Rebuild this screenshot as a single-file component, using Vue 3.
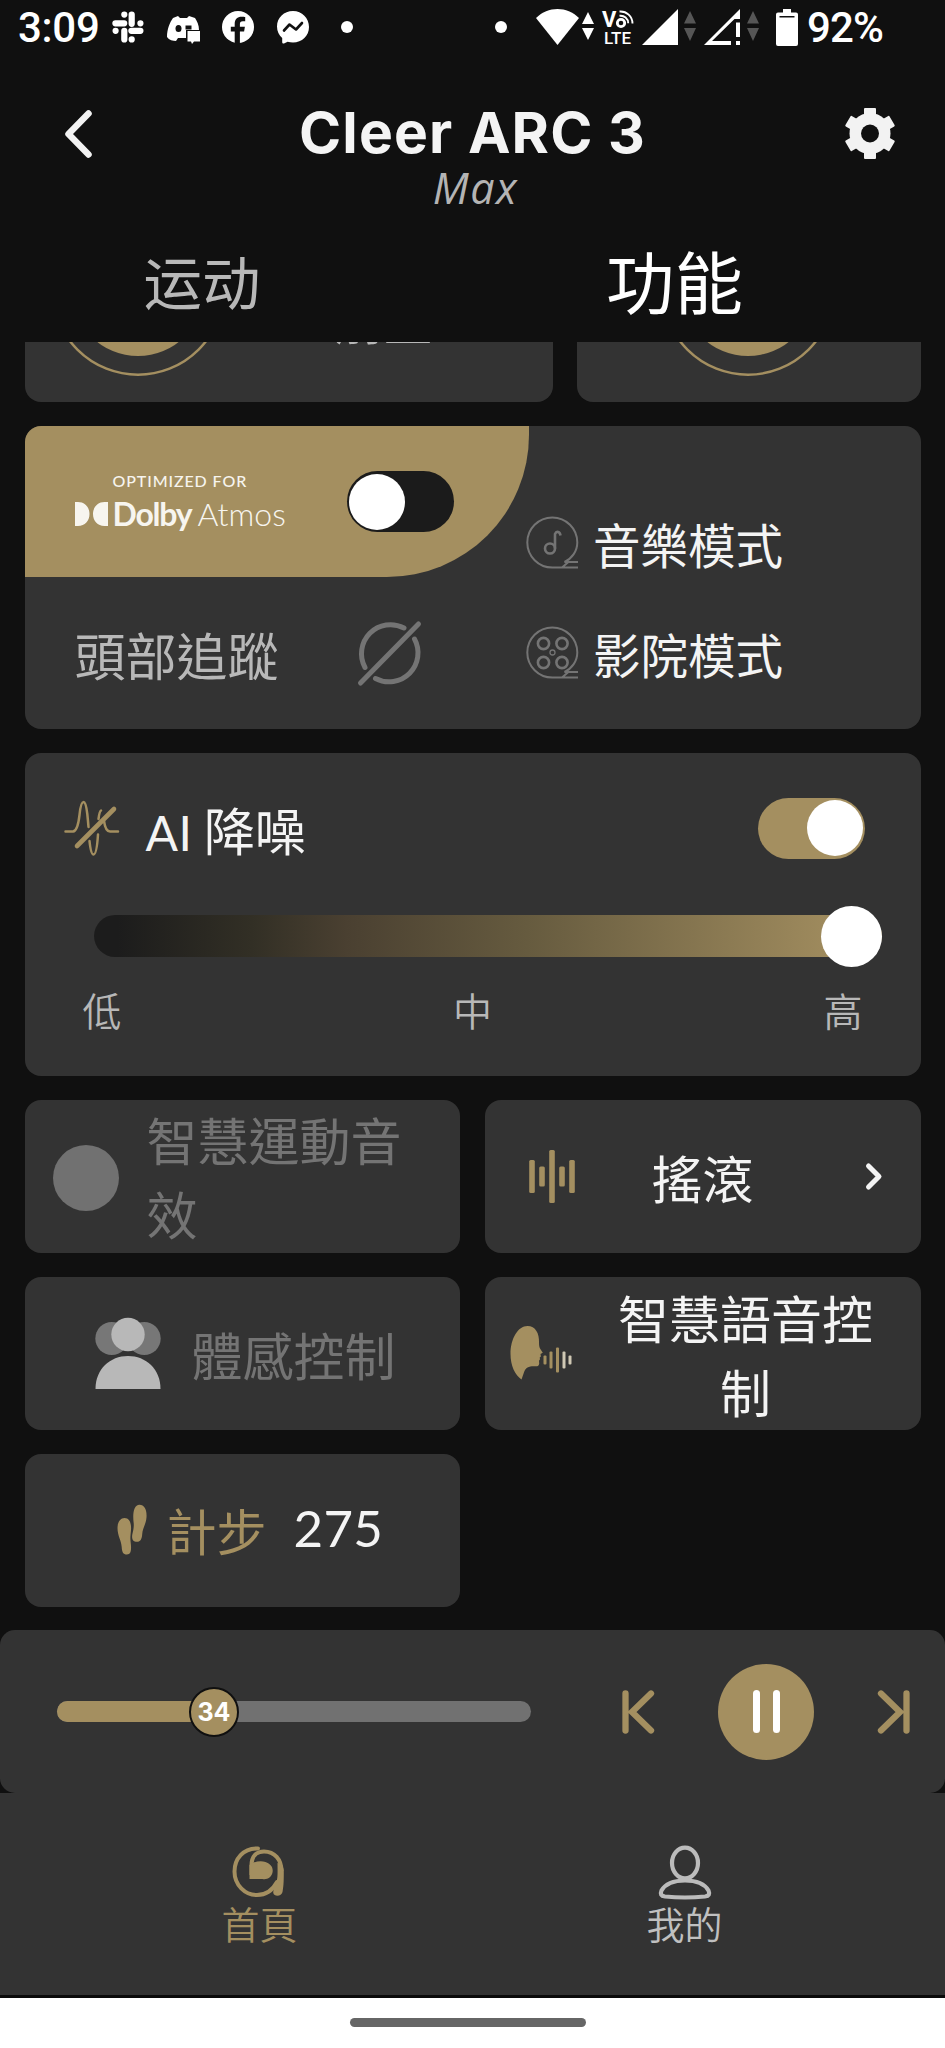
<script setup>
import { ref } from 'vue'

const volume = ref(34)
const dolbyOn = ref(false)
const aiOn = ref(true)
const eqBars = [
  { x: 3, h: 33 },
  { x: 13, h: 20 },
  { x: 23, h: 53 },
  { x: 33, h: 20 },
  { x: 43, h: 33 },
]
const voiceBars = [
  { x: 35, h: 9 },
  { x: 41, h: 17 },
  { x: 47.5, h: 25 },
  { x: 54, h: 17 },
  { x: 60, h: 9 },
]
</script>

<template>
  <div class="phone">
    <div class="status">
      <span class="clock">3:09</span>
      <svg class="s-slack" width="32" height="32" viewBox="0 0 32 32" fill="none" stroke="#fff" stroke-width="6.2" stroke-linecap="round">
        <path d="M19.7 3.6v9.2M28.4 19.8h-9M12.3 28.4v-8.6M3.4 12.3h8.8" />
        <path d="M12.3 3.6h.01M28.4 12.3h.01M19.7 28.4h.01M3.6 19.8h.01" />
      </svg>
      <svg class="s-discord" width="34" height="30" viewBox="0 0 34 30">
        <path fill="#fff" d="M11 2 6 4C3 8 0 15 0 23c2 3 6 4 9 4l2-3h8V16h13c0-5-2-9-4-12l-6-2-2 2h-7z" />
        <ellipse cx="11.5" cy="14.5" rx="3" ry="3.6" fill="#101010" />
        <path fill="#101010" d="M18.500 11.500h6v4h-6z" />
        <path fill="#fff" d="M20.500 17H33v10.500h-6L25 30l-1-2.500h-3.500z" />
      </svg>
      <svg class="s-fb" width="32" height="32" viewBox="0 0 32 32">
        <circle cx="16" cy="16" r="16" fill="#fff" />
        <path d="M12.700 32V20.500H8.800v-4.800h3.900v-3c0-4.600 2.800-7 6.800-7 1.700 0 3 .2 3.700.3v4.300h-2.300c-2.400 0-3 1.200-3 2.800v2.600h5l-.8 4.800h-4.200V32z" fill="#101010" />
      </svg>
      <svg class="s-msg" width="32" height="33" viewBox="0 0 32 33">
        <path fill="#fff" d="M16 0C7 0 0 6.600 0 15.500c0 4.700 2 8.700 5.200 11.500v4.200c0 1 1 1.600 1.800 1.200l3.600-1.700c1.700.5 3.500.8 5.400.8 9 0 16-6.600 16-15.500S25 0 16 0z" />
        <path fill="none" stroke="#101010" stroke-width="2.600" stroke-linejoin="round" stroke-linecap="round" d="M7 19.500l5.500-6 6.500 5 6-6.500" />
      </svg>
      <i class="dot d1"></i>
      <i class="dot d2"></i>
      <svg class="s-wifi" width="43" height="36" viewBox="0 0 43 36"><path fill="#fff" d="M0 9C12-3 31-3 43 9L21.500 36z" /></svg>
      <svg class="s-ar1" width="12" height="28" viewBox="0 0 12 28"><path fill="#fff" d="M6 0l6 12H0zM6 28l6-12H0z" /></svg>
      <svg class="s-volte" width="33" height="36" viewBox="0 0 33 36">
        <text x="0" y="18" class="vo">V</text>
        <circle cx="19" cy="14" r="3.700" fill="none" stroke="#fff" stroke-width="2.800" />
        <path d="M17.500 6.800a7.500 7.500 0 0 1 8.700 7.500M17.500 2.500a12 12 0 0 1 13 12" fill="none" stroke="#fff" stroke-width="1.900" />
        <text x="2" y="35" class="lte" textLength="27">LTE</text>
      </svg>
      <svg class="s-sig" width="36" height="36" viewBox="0 0 36 36"><path fill="#fff" d="M36 0v36H0z" /></svg>
      <svg class="s-ar2" width="12" height="30" viewBox="0 0 12 30"><path fill="#565656" d="M6 0l6 12.500H0zM6 30l6-13H0z" /></svg>
      <svg class="s-sig2" width="37" height="36" viewBox="0 0 37 36">
        <path fill="#fff" d="M36 0v10h-5.500L8 32h19v4H0z" />
        <path fill="#fff" d="M32 13.500h4V28h-4zM32 32h4v4h-4z" />
      </svg>
      <svg class="s-ar3" width="12" height="30" viewBox="0 0 12 30"><path fill="#565656" d="M6 0l6 12.500H0zM6 30l6-13H0z" /></svg>
      <svg class="s-bat" width="22" height="37" viewBox="0 0 22 37">
        <path fill="#fff" d="M7 0h8v3.500h5a2 2 0 0 1 2 2V35a2 2 0 0 1-2 2H2a2 2 0 0 1-2-2V5.500a2 2 0 0 1 2-2h5z" />
        <path fill="#101010" d="M3.500 7h15v1.500h-15z" />
      </svg>
      <span class="pct">92%</span>
    </div>

    <header class="header">
      <svg class="back" width="30" height="60" viewBox="0 0 30 60" fill="none" stroke="#f2f2f2" stroke-width="6.500" stroke-linecap="round" stroke-linejoin="round">
        <path d="M25.500 10.500 5.500 31 25.500 51.500" />
      </svg>
      <div class="titles">
        <h1>Cleer ARC 3</h1>
        <p>Max</p>
      </div>
      <svg class="gear" width="52" height="60" viewBox="-26 -30.500 52 60">
        <g fill="#f2f2f2">
          <circle r="20.500" />
          <rect v-for="a in [0, 60, 120, 180, 240, 300]" :key="a" x="-6" y="-25.500" width="12" height="12" rx="1" :transform="`rotate(${a})`" />
        </g>
        <circle r="9" fill="#101010" />
      </svg>
    </header>

    <nav class="tabs">
      <span class="tab">运动</span>
      <span class="tab active">功能</span>
    </nav>

    <main class="content">
      <section class="row peek">
        <div class="card wide">
          <svg class="knob" width="174" height="174" viewBox="0 0 174 174"><circle cx="87" cy="88" r="66" fill="#a48f60" /><circle cx="87" cy="87" r="85.700" fill="none" stroke="#a48f60" stroke-width="2.500" /></svg>
          <span>前置</span>
        </div>
        <div class="card slim">
          <svg class="knob" width="174" height="174" viewBox="0 0 174 174"><circle cx="87" cy="88" r="66" fill="#a48f60" /><circle cx="87" cy="87" r="85.700" fill="none" stroke="#a48f60" stroke-width="2.500" /></svg>
        </div>
      </section>

      <section class="card dolby">
        <div class="left">
          <div class="gold">
            <div class="logo">
              <small>OPTIMIZED FOR</small>
              <div class="brand">
                <svg width="33" height="24" viewBox="0 0 33 24" fill="#f7f5ef"><path d="M0 0h3c7 0 11.500 5.400 11.500 12S10 24 3 24H0zM33 0h-3.500C22.500 0 18 5.400 18 12s4.500 12 11.500 12H33z" /></svg>
                <b>Dolby</b><span>Atmos</span>
              </div>
            </div>
            <div class="toggle dark" :class="{ on: dolbyOn }"><i></i></div>
          </div>
          <div class="head">
            <span>頭部追蹤</span>
            <svg width="66" height="66" viewBox="0 0 66 66" fill="none" stroke="#747474" stroke-width="5" stroke-linecap="round">
              <path d="M47 8A29 29 0 0 0 8 47.500M18.500 58.500A29 29 0 0 0 57.500 19M3.500 63 61.500 4" />
            </svg>
          </div>
        </div>
        <div class="modes">
          <div>
            <svg width="54" height="54" viewBox="0 0 54 54" fill="none" stroke="#747474" stroke-width="2">
              <path d="M53 46H39.500C47 42.500 52.300 35 52.300 26.500A25 25 0 1 0 27.300 51.500H53M37 51.500l7-6" />
              <circle cx="25" cy="32.500" r="5" stroke-width="2.600" /><path stroke-width="2.600" d="M30 32.500V18c1.500-3.500 5-2.500 5.500 1.500" />
            </svg>
            <span>音樂模式</span>
          </div>
          <div>
            <svg width="54" height="54" viewBox="0 0 54 54" fill="none" stroke="#747474" stroke-width="2">
              <path d="M53 46H39.500C47 42.500 52.300 35 52.300 26.500A25 25 0 1 0 27.300 51.500H53M37 51.500l7-6" />
              <g stroke-width="2.600"><circle cx="18.500" cy="17.500" r="5.600" /><circle cx="37" cy="17.500" r="5.600" /><circle cx="18.500" cy="36.500" r="5.600" /><circle cx="37" cy="36.500" r="5.600" /></g>
              <circle cx="27.500" cy="26.500" r="2.500" stroke-width="1.300" />
            </svg>
            <span>影院模式</span>
          </div>
        </div>
      </section>

      <section class="card ai">
        <div class="ai-top">
          <svg width="56" height="56" viewBox="0 0 56 56" fill="none" stroke="#a48f60" stroke-width="2.500" stroke-linecap="round" stroke-linejoin="round">
            <path d="M1.500 31.500H9C13 31 14.500 24 15.500 15 16.500 5 18 2 19.500 2c2 0 3 5 3.800 12 .6 6 .9 9 1.200 13M25.500 41c.8 8 2 13.500 4 13.500 2.200 0 3.600-6 4.500-20M34.500 19c.6-5 1.500-8 2.500-8.500M40 21c1 7 2.500 10.500 6 10.500h8" />
            <path stroke-width="4.600" d="M13 46 50 9" />
          </svg>
          <span class="ai-title"><em>AI</em> 降噪</span>
          <div class="toggle" :class="{ on: aiOn }"><i></i></div>
        </div>
        <div class="level"><i></i></div>
        <div class="marks"><span>低</span><span>中</span><span>高</span></div>
      </section>

      <section class="grid">
        <div class="card t-sport"><i class="disc"></i><span>智慧運動音效</span></div>
        <div class="card t-eq">
          <svg width="46" height="56" viewBox="0 0 46 56" fill="#a48f60"><rect v-for="b in eqBars" :key="b.x" :x="b.x - 2.800" :y="28.500 - b.h / 2" width="5.600" :height="b.h" rx="1.500" /></svg>
          <span>搖滾</span>
          <svg width="18" height="30" viewBox="0 0 18 30" fill="none" stroke="#f4f4f4" stroke-width="5" stroke-linecap="round" stroke-linejoin="round"><path d="M3.500 5 14 15.500 3.500 26" /></svg>
        </div>
        <div class="card t-body">
          <svg width="66" height="72" viewBox="0 0 66 72">
            <circle cx="16.800" cy="21.500" r="16.500" fill="#777" /><circle cx="49.200" cy="21.500" r="16.500" fill="#777" />
            <circle cx="33" cy="17.500" r="16.700" fill="#b8b8b8" /><path d="M.5 72C.5 52 15 39 33 39S65.500 52 65.500 72z" fill="#b8b8b8" />
          </svg>
          <span>體感控制</span>
        </div>
        <div class="card t-voice">
          <svg width="64" height="56" viewBox="0 0 64 56" fill="#a48f60">
            <path d="M17.500 1C25.500 1 29.500 8.500 29 17.500c0 4 .5 5.500 2 7.500l1.800 2.800-2.300 1.200.4 2.500-1.200 1 .3 1.700-1 1.500.2 2.800c-.2 2.200-1.500 3-4 2.800-6-.3-9.500 1.200-11 5.500L11.500 54.500C5 50 .5 40.500.5 29 .5 13.500 8 1 17.500 1z" />
            <rect v-for="b in voiceBars" :key="b.x" :x="b.x - 1.500" :y="35 - b.h / 2" width="3" :height="b.h" rx="1" :class="{ pale: b.x > 50 }" />
          </svg>
          <span>智慧語音控制</span>
        </div>
        <div class="card t-steps">
          <svg width="32" height="52" viewBox="0 0 32 52" fill="#a48f60">
            <path d="M7.500 14c5 0 7 5 6.500 12-.5 6-1 8-.2 13.500C14.500 46 14 50.500 10 50.500S5 48 4.700 43C4.300 36 .5 32 .5 24c0-6 3-10 7-10zM22.500.8c5 0 7.500 5 7 12.500-.5 7-4 11-4.300 17-.3 5-2 7.500-5 7.500-4.500 0-5.500-2.800-5-6.800 1-5 2-8 1.400-12.500C15.500 9 17 .8 22.500.8z" />
          </svg>
          <span>計步</span><b>275</b>
        </div>
      </section>
    </main>

    <section class="player-wrap">
      <div class="player">
        <div class="volume">
          <div class="fill"></div>
          <div class="thumb" :style="{ left: `calc(${volume}% - 29px)` }">{{ volume }}</div>
        </div>
        <svg class="prev" width="34" height="46" viewBox="0 0 34 46" fill="none" stroke="#a48f60" stroke-width="6.300" stroke-linecap="round"><path d="M4.500 4.500v37M30 4.500 11 23 30 41.500" /></svg>
        <div class="pause"><i></i><i></i></div>
        <svg class="next" width="34" height="46" viewBox="0 0 34 46" fill="none" stroke="#a48f60" stroke-width="6.300" stroke-linecap="round"><path d="M29.500 4.500v37M4 4.500 23 23 4 41.500" /></svg>
      </div>
    </section>

    <nav class="bottom">
      <div class="item home">
        <svg width="54" height="54" viewBox="0 0 54 54" fill="none" stroke="#a48f60">
          <path stroke-width="4" stroke-linecap="round" d="M26 3.500C11 3 2.500 14 2.500 26.500 2.500 40 13 50 25 50c9 0 15.500-4.500 20-13" />
          <path stroke-width="4" d="M19.500 30V20.500C19.500 11.500 24 6.500 32 6.500c10.500 0 17.500 8 17.500 19.500" />
          <path fill="#a48f60" stroke="none" d="M45.500 18c3.500 0 6.300 3 6.300 8 0 9 0 14-1.300 21-.8 4.500-8.500 4.800-9.200 1-.5-3.500 2-7 3.200-11 1.500-5 1-12 1-19zM17.500 34V20c4-3.500 11-4.500 16-3 5.500 1.800 8 6 7 10.500-1 4.800-5.500 7.500-10 6.500z" />
        </svg>
        <span>首頁</span>
      </div>
      <div class="item">
        <svg width="54" height="54" viewBox="0 0 54 54" fill="none" stroke="#bcbcbc" stroke-width="4.200">
          <ellipse cx="28" cy="18" rx="13" ry="15.300" />
          <path d="M28 35.500c12 0 20 4 23.500 10 1.500 3.500.5 5.500-3.500 6-12 1.200-28 1.200-40 0-4-.5-5-2.500-3.500-6 3.500-6 11.500-10 23.500-10z" />
        </svg>
        <span>我的</span>
      </div>
    </nav>

    <div class="gesture"><i></i></div>
  </div>
</template>

<style>
html, body { margin: 0; background: #101010; }
</style>

<style scoped>
* { box-sizing: border-box; }
.phone {
  width: 945px; height: 2048px; overflow: hidden;
  display: flex; flex-direction: column;
  background: #101010; color: #f4f4f4;
  font-family: 'Noto Sans CJK TC', 'Noto Sans CJK SC', sans-serif;
}
svg { flex: none; display: block; overflow: visible; }
span { white-space: nowrap; }

.status { height: 54px; flex: none; display: flex; align-items: center; padding-left: 18px; color: #fff; }
.clock, .pct { font: 500 42px/54px Roboto, sans-serif; padding-top: 1px; }
.clock { width: 94px; letter-spacing: -.3px; }
.pct { margin-left: 9px; letter-spacing: -.9px; }
.s-discord { margin-left: 23px; margin-top: 3px; }
.s-fb { margin-left: 21px; }
.s-msg { margin-left: 23px; }
.dot { width: 12px; height: 12px; border-radius: 50%; background: #fff; flex: none; }
.d1 { margin-left: 32px; }
.d2 { margin-left: 142px; }
.s-wifi { margin-left: 29px; }
.s-ar1 { margin-left: 3px; margin-bottom: 3px; }
.s-volte { margin-left: 8px; }
.s-sig { margin-left: 7px; }
.s-ar2 { margin-left: 6px; margin-bottom: 3px; }
.s-sig2 { margin-left: 8px; }
.s-ar3 { margin-left: 6px; margin-bottom: 3px; }
.s-bat { margin-left: 17px; }
.vo { font: 700 22px Roboto, sans-serif; fill: #fff; }
.lte { font: 500 17px Roboto, sans-serif; fill: #fff; }

.header { height: 159px; flex: none; padding: 49px 49px 0 63px; display: grid; grid-template-columns: 1fr auto 1fr; align-items: start; }
.gear { justify-self: end; }
.titles { text-align: center; margin-left: -14px; }
h1 { margin: 0; font: 700 57px/60px Inter, sans-serif; letter-spacing: 1.1px; white-space: nowrap; }
.titles p { margin: 0; font: italic 400 43px/50px 'Open Sans', sans-serif; letter-spacing: 1.5px; color: #b4b4b4; padding-left: 6px; }

.tabs { height: 129px; flex: none; display: grid; grid-template-columns: 404px 541px; align-items: center; text-align: center; font-family: 'Noto Sans CJK SC', sans-serif; }
.tab { font-size: 58.500px; line-height: 129px; color: #b8b8b8; padding-top: 2px; }
.tab.active { font-size: 68.500px; color: #fff; }

.content { height: 1288px; flex: none; padding: 0 24.5px; display: flex; flex-direction: column; gap: 24.5px; overflow: hidden; }
.card { background: #333; border-radius: 16px; overflow: hidden; }
.row { display: flex; gap: 24.5px; }
.peek { height: 59.5px; flex: none; }
.peek .card { border-radius: 0 0 16px 16px; display: flex; align-items: flex-end; }
.wide { width: 528px; padding-left: 26px; }
.slim { width: 343.5px; padding-left: 83.5px; }
.knob { margin-bottom: 26px; }
.wide span { margin-left: 110px; font-size: 49px; line-height: 60px; color: #b8b8b8; margin-bottom: 53px; }

.dolby { height: 302.5px; flex: none; display: flex; }
.left { width: 504.5px; }
.gold { height: 151px; background: #a48f60; border-radius: 0 0 142px 0; display: flex; align-items: center; padding: 0 75.500px 0 50px; justify-content: space-between; }
.logo { color: #f7f5ef; font-family: Lato, sans-serif; width: 214px; margin-top: -2px; }
.logo small { display: block; font-size: 16px; line-height: 20px; letter-spacing: .9px; padding-left: 38px; white-space: nowrap; font-weight: 500; }
.brand { display: flex; align-items: center; margin-top: 6px; font-size: 32px; line-height: 34px; }
.brand b { margin-left: 5px; font-weight: 700; letter-spacing: -1.2px; }
.brand span { margin-left: 6px; font-weight: 300; }
.toggle { width: 107px; height: 61px; border-radius: 31px; background: #a48f60; padding: 2.500px; display: flex; flex: none; }
.toggle.dark { background: #1b1b1b; }
.toggle.on { justify-content: flex-end; }
.toggle i { width: 56px; height: 56px; border-radius: 50%; background: #fff; }
.head { height: 151px; display: flex; align-items: center; padding: 0 0 0 50px; }
.head span { font-size: 51px; line-height: 60px; color: #b8b8b8; width: 282px; padding-top: 3px; }
.modes { display: flex; flex-direction: column; justify-content: flex-end; padding-bottom: 46px; gap: 50px; }
.modes > div { display: flex; align-items: center; height: 60px; margin-left: -4px; }
.modes span { margin-left: 14px; font-size: 47.5px; line-height: 60px; padding-top: 3px; }

.ai { height: 322.5px; flex: none; padding: 44px 0 0; }
.ai-top { display: flex; align-items: center; height: 62px; padding: 0 55.500px 0 39px; }
.ai-title { flex: 1; margin-left: 26px; font-size: 51px; line-height: 62px; padding-top: 2px; }
.ai-title em { font: 400 48px Lato, sans-serif; letter-spacing: .5px; }
.level { margin: 56px 39px 0 69.5px; height: 42px; border-radius: 21px; background: linear-gradient(90deg, #1c1c1c 3%, #322f25 20%, #4a4031 32%, #665b3f 55%, #a48f60 97%); display: flex; justify-content: flex-end; align-items: center; }
.level i { width: 61px; height: 61px; border-radius: 50%; background: #fff; flex: none; }
.marks { display: flex; justify-content: space-between; padding: 0 58px; margin-top: 29px; font-size: 39px; line-height: 46px; color: #b8b8b8; font-weight: 350; }

.grid { display: grid; grid-template-columns: 435.5px 435.5px; grid-auto-rows: 152.5px; gap: 24.5px 25px; }
.grid .card { display: flex; align-items: center; }
.grid span { font-size: 51px; line-height: 74px; margin-top: 1px; }
.t-sport { padding-left: 28px; color: #747474; }
.disc { width: 66px; height: 66px; border-radius: 50%; background: #717171; flex: none; margin-top: 3px; }
.grid .t-sport span { margin-left: 28px; width: 270px; white-space: normal; margin-top: 0; }
.t-eq { padding: 0 37.500px 0 44px; justify-content: space-between; }
.t-eq span { margin-left: 76.500px; margin-right: auto; }
.t-body { padding-left: 70px; color: #747474; }
.t-body span { margin-left: 31px; }
.t-voice { padding-left: 24.500px; }
.grid .t-voice span { width: 256px; margin: 1px 0 0 44px; white-space: normal; text-align: center; }
.pale { fill: #cfc8b4; }
.t-steps { padding-left: 92px; }
.grid .t-steps span { color: #a48f60; margin-left: 18px; margin-top: -2px; font-size: 50px; }
.t-steps b { font: 400 51px/74px Lato, sans-serif; margin: -4px 0 0 27px; letter-spacing: .3px; }

.player-wrap { height: 163px; flex: none; }
.player { height: 163px; background: #333; border-radius: 15px; display: flex; align-items: center; padding-left: 57px; }
.volume { position: relative; width: 473.500px; height: 21px; border-radius: 11px; background: #717171; }
.fill { width: 34%; height: 21px; border-radius: 11px 0 0 11px; background: #a48f60; }
.thumb { position: absolute; top: -14.500px; width: 50px; height: 50px; border-radius: 50%; border: 2.500px solid #101010; background: #a48f60; color: #fff; font: 700 25px/46px Inter, sans-serif; text-align: center; }
.prev { margin-left: 90px; }
.pause { width: 96px; height: 96px; margin-left: 63.500px; border-radius: 50%; background: #a48f60; display: flex; align-items: center; justify-content: center; gap: 13px; }
.pause i { width: 7px; height: 43px; border-radius: 4px; background: #fff; }
.next { margin-left: 63px; }

.bottom { height: 202px; flex: none; background: #333; padding: 52px 48px 0 47px; display: flex; }
.item { flex: 1; display: flex; flex-direction: column; align-items: center; color: #c0c0c0; font-size: 38px; line-height: 46px; font-weight: 350; }
.item svg { margin-right: 2px; }
.item span { margin-top: 1px; }
.home { color: #a48f60; }
.gesture { flex: 1; background: #fff; border-top: 3px solid #0a0a0a; display: flex; justify-content: center; align-items: flex-start; padding: 20px 9px 0 0; }
.gesture i { width: 236px; height: 9px; border-radius: 5px; background: #666; }
</style>
